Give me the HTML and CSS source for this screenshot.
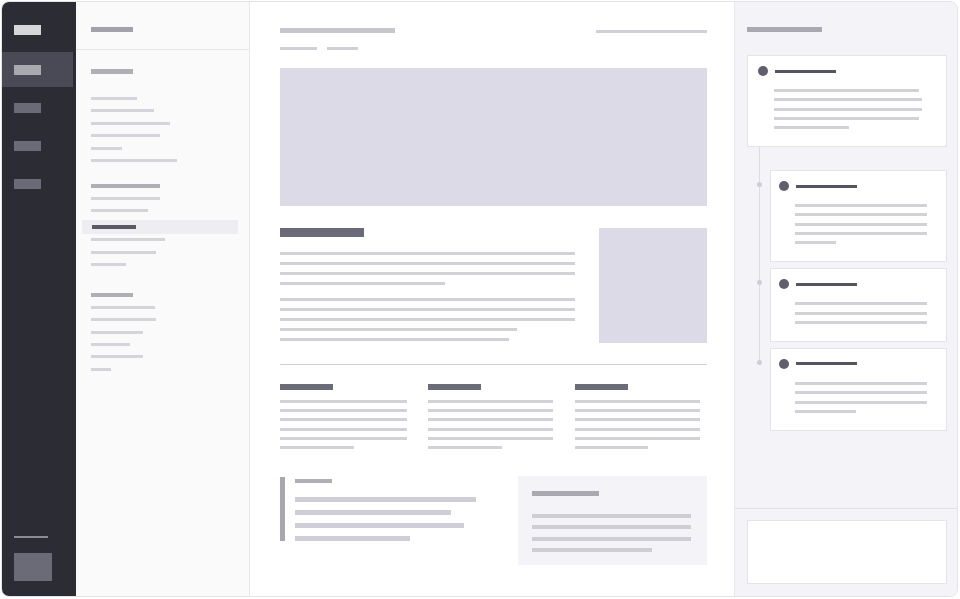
FILE: index.html
```html
<!DOCTYPE html>
<html lang="en">
<head>
<meta charset="utf-8">
<title>Docs wireframe</title>
<link rel="stylesheet" href="styles.css">
</head>
<body>
<div class="frame">
  <aside class="rail">
    <div class="rail-logo"></div>
    <nav class="rail-nav">
      <div class="rail-item active"><span class="rail-bar"></span></div>
      <div class="rail-item"><span class="rail-bar"></span></div>
      <div class="rail-item"><span class="rail-bar"></span></div>
      <div class="rail-item"><span class="rail-bar"></span></div>
    </nav>
    <div class="rail-foot">
      <div class="rail-line"></div>
      <div class="rail-avatar"></div>
    </div>
  </aside>

  <aside class="nav">
    <div class="nav-head"><span class="bar nav-title" style="width:42px"></span></div>
    <div class="nav-body">
      <span class="bar nav-heading first" style="width:42px"></span>
      <div class="nav-list first">
        <span class="bar item" style="width:46px"></span>
        <span class="bar item" style="width:63px"></span>
        <span class="bar item" style="width:79px"></span>
        <span class="bar item" style="width:69px"></span>
        <span class="bar item" style="width:31px"></span>
        <span class="bar item" style="width:86px"></span>
      </div>
      <span class="bar nav-heading second" style="width:69px"></span>
      <div class="nav-list">
        <span class="bar item" style="width:69px"></span>
        <span class="bar item" style="width:57px"></span>
        <div class="nav-active"><span class="bar item-active" style="width:44px"></span></div>
        <span class="bar item" style="width:74px"></span>
        <span class="bar item" style="width:65px"></span>
        <span class="bar item" style="width:35px"></span>
      </div>
      <span class="bar nav-heading third" style="width:42px"></span>
      <div class="nav-list">
        <span class="bar item" style="width:64px"></span>
        <span class="bar item" style="width:65px"></span>
        <span class="bar item" style="width:52px"></span>
        <span class="bar item" style="width:39px"></span>
        <span class="bar item" style="width:52px"></span>
        <span class="bar item" style="width:20px"></span>
      </div>
    </div>
  </aside>

  <main class="main">
    <div class="title-row">
      <span class="bar page-title" style="width:115px"></span>
      <span class="bar page-aside" style="width:111px"></span>
    </div>
    <div class="meta-row">
      <span class="bar meta" style="width:37px"></span>
      <span class="bar meta" style="width:31px"></span>
    </div>
    <div class="hero"></div>

    <section class="article">
      <div class="article-text">
        <span class="bar section-title" style="width:84px"></span>
        <div class="para first">
          <span class="bar line" style="width:295px"></span>
          <span class="bar line" style="width:295px"></span>
          <span class="bar line" style="width:295px"></span>
          <span class="bar line" style="width:165px"></span>
        </div>
        <div class="para">
          <span class="bar line" style="width:295px"></span>
          <span class="bar line" style="width:295px"></span>
          <span class="bar line" style="width:295px"></span>
          <span class="bar line" style="width:237px"></span>
          <span class="bar line" style="width:229px"></span>
        </div>
      </div>
      <div class="article-figure"></div>
    </section>

    <div class="divider"></div>

    <section class="columns">
      <div class="col">
        <span class="bar col-title" style="width:53px"></span>
        <div class="col-lines">
          <span class="bar line" style="width:127px"></span>
          <span class="bar line" style="width:127px"></span>
          <span class="bar line" style="width:127px"></span>
          <span class="bar line" style="width:127px"></span>
          <span class="bar line" style="width:127px"></span>
          <span class="bar line" style="width:74px"></span>
        </div>
      </div>
      <div class="col">
        <span class="bar col-title" style="width:53px"></span>
        <div class="col-lines">
          <span class="bar line" style="width:125px"></span>
          <span class="bar line" style="width:125px"></span>
          <span class="bar line" style="width:125px"></span>
          <span class="bar line" style="width:125px"></span>
          <span class="bar line" style="width:125px"></span>
          <span class="bar line" style="width:74px"></span>
        </div>
      </div>
      <div class="col">
        <span class="bar col-title" style="width:53px"></span>
        <div class="col-lines">
          <span class="bar line" style="width:125px"></span>
          <span class="bar line" style="width:125px"></span>
          <span class="bar line" style="width:125px"></span>
          <span class="bar line" style="width:125px"></span>
          <span class="bar line" style="width:125px"></span>
          <span class="bar line" style="width:73px"></span>
        </div>
      </div>
    </section>

    <section class="bottom-row">
      <blockquote class="quote">
        <span class="bar quote-title" style="width:37px"></span>
        <div class="quote-lines">
          <span class="bar qline" style="width:181px"></span>
          <span class="bar qline" style="width:156px"></span>
          <span class="bar qline" style="width:169px"></span>
          <span class="bar qline" style="width:115px"></span>
        </div>
      </blockquote>
      <div class="callout">
        <span class="bar callout-title" style="width:67px"></span>
        <div class="callout-lines">
          <span class="bar cline" style="width:159px"></span>
          <span class="bar cline" style="width:159px"></span>
          <span class="bar cline" style="width:159px"></span>
          <span class="bar cline" style="width:120px"></span>
        </div>
      </div>
    </section>
  </main>

  <aside class="panel">
    <div class="panel-top">
      <span class="bar panel-title" style="width:75px"></span>
      <div class="card root">
        <div class="card-head"><span class="dot"></span><span class="bar card-title" style="width:61px"></span></div>
        <div class="card-body">
          <span class="bar line" style="width:145px"></span>
          <span class="bar line" style="width:148px"></span>
          <span class="bar line" style="width:148px"></span>
          <span class="bar line" style="width:145px"></span>
          <span class="bar line" style="width:75px"></span>
        </div>
      </div>
      <div class="timeline">
        <div class="card reply">
          <div class="card-head"><span class="dot"></span><span class="bar card-title" style="width:61px"></span></div>
          <div class="card-body">
            <span class="bar line" style="width:132px"></span>
            <span class="bar line" style="width:132px"></span>
            <span class="bar line" style="width:132px"></span>
            <span class="bar line" style="width:132px"></span>
            <span class="bar line" style="width:41px"></span>
          </div>
        </div>
        <div class="card reply">
          <div class="card-head"><span class="dot"></span><span class="bar card-title" style="width:61px"></span></div>
          <div class="card-body">
            <span class="bar line" style="width:132px"></span>
            <span class="bar line" style="width:132px"></span>
            <span class="bar line" style="width:132px"></span>
          </div>
        </div>
        <div class="card reply">
          <div class="card-head"><span class="dot"></span><span class="bar card-title" style="width:61px"></span></div>
          <div class="card-body">
            <span class="bar line" style="width:132px"></span>
            <span class="bar line" style="width:132px"></span>
            <span class="bar line" style="width:132px"></span>
            <span class="bar line" style="width:61px"></span>
          </div>
        </div>
      </div>
    </div>
    <div class="panel-bottom">
      <div class="composer"></div>
    </div>
  </aside>
</div>
</body>
</html>
```

FILE: styles.css
```css
* { box-sizing: border-box; }
html, body { margin: 0; padding: 0; background: #ffffff; font-family: "Liberation Sans", Arial, sans-serif; }

.frame {
  margin: 1px;
  width: 957px;
  height: 596px;
  border: 1px solid #e4e3ea;
  border-radius: 8px;
  overflow: hidden;
  display: flex;
  background: #ffffff;
}

.bar { display: block; flex: none; }

/* dark rail */
.rail {
  width: 74px;
  flex: none;
  background: #2c2d34;
  display: flex;
  flex-direction: column;
}
.rail-logo {
  margin: 23px 0 0 12px;
  width: 27px;
  height: 10px;
  background: #d6d6d9;
}
.rail-nav {
  margin-top: 17px;
  display: flex;
  flex-direction: column;
  gap: 3px;
}
.rail-item {
  height: 35px;
  margin-right: 3px;
  padding-left: 12px;
  display: flex;
  align-items: center;
}
.rail-item.active { background: #4a4a56; }
.rail-bar { display: block; width: 27px; height: 10px; background: #6b6b77; }
.rail-item.active .rail-bar { background: #a9a9b0; }
.rail-foot {
  margin-top: auto;
  padding: 0 0 15px 12px;
  display: flex;
  flex-direction: column;
  gap: 15px;
}
.rail-line { width: 34px; height: 2px; background: #8c8c96; }
.rail-avatar { width: 38px; height: 28px; background: #6b6b77; }

/* nav column */
.nav {
  width: 174px;
  flex: none;
  background: #fafafa;
  border-right: 1px solid #e8e7ec;
}
.nav-head {
  height: 48px;
  padding: 25px 0 0 15px;
  border-bottom: 1px solid #e4e3e9;
}
.nav-title { height: 5px; background: #a3a2aa; }
.nav-body { padding: 19px 11px 0 15px; }
.nav-heading { height: 4px; background: #b0afb7; }
.nav-heading.first { height: 5px; }
.nav-heading.second { margin-top: 22px; }
.nav-heading.third { margin-top: 27px; }
.nav-list {
  margin-top: 9px;
  display: flex;
  flex-direction: column;
  gap: 9.4px;
}
.nav-list.first { margin-top: 23px; }
.item { height: 3px; background: #d5d4da; }
.nav-active {
  margin: -2px 0 -5px -9px;
  height: 14px;
  padding: 5px 0 0 10px;
  background: #eeedf2;
}
.item-active { height: 4px; background: #5b5a66; }

/* main */
.main {
  width: 484px;
  flex: none;
  padding: 26px 27px 0 30px;
  background: #ffffff;
}
.title-row {
  display: flex;
  justify-content: space-between;
  align-items: flex-end;
}
.page-title { height: 5px; background: #c7c6cd; }
.page-aside { height: 3px; background: #d0cfd6; }
.meta-row { margin-top: 14px; display: flex; gap: 10px; }
.meta { height: 3px; background: #d0cfd6; }
.hero { margin-top: 18px; height: 138px; background: #dcdae6; }

.article {
  margin-top: 22px;
  display: flex;
  justify-content: space-between;
}
.article-text { width: 295px; }
.section-title { height: 9px; background: #6b6a78; }
.para { margin-top: 13px; display: flex; flex-direction: column; gap: 7px; }
.para.first { margin-top: 15px; }
.line { height: 3px; background: #d2d1d8; }
.article-figure { width: 108px; height: 115px; background: #dcdae6; }

.divider { margin-top: 21px; height: 1px; background: #cfcdd5; }

.columns {
  margin-top: 19px;
  display: grid;
  grid-template-columns: 128px 127px 127px;
  column-gap: 20px;
}
.col-title { height: 6px; background: #6c6b78; }
.col-lines { margin-top: 10px; display: flex; flex-direction: column; gap: 6.2px; }

.bottom-row {
  margin-top: 27px;
  display: flex;
  justify-content: space-between;
  align-items: flex-start;
}
.quote {
  margin: 1px 0 0 0;
  height: 64px;
  width: 220px;
  border-left: 5px solid #a8a7b0;
  padding: 2px 0 0 10px;
}
.quote-title { height: 4px; background: #b0afb7; }
.quote-lines { margin-top: 14px; display: flex; flex-direction: column; gap: 8px; }
.qline { height: 5px; background: #cfcdd5; }
.callout {
  width: 189px;
  height: 89px;
  padding: 15px 16px 0 14px;
  background: #f4f3f8;
}
.callout-title { height: 5px; background: #aaa9b1; }
.callout-lines { margin-top: 18px; display: flex; flex-direction: column; gap: 7.3px; }
.cline { height: 4px; background: #cfcdd5; }

/* right panel */
.panel {
  width: 223px;
  flex: none;
  background: #f4f3f8;
  border-left: 1px solid #e8e7ee;
  display: flex;
  flex-direction: column;
}
.panel-top { flex: 1; padding: 25px 10px 0 12px; }
.panel-title { height: 5px; background: #aaa9b1; }
.card {
  background: #ffffff;
  border: 1px solid #e4e3ea;
  padding: 10px 10px 17px 10px;
}
.card.root { margin-top: 23px; }
.card-head { display: flex; align-items: center; gap: 7px; }
.dot { display: block; width: 10px; height: 10px; border-radius: 50%; background: #605f6c; flex: none; }
.card-title { height: 3px; background: #55545f; }
.card-body { margin-top: 13px; margin-left: 16px; display: flex; flex-direction: column; gap: 6.3px; }
.timeline {
  position: relative;
  margin-top: 23px;
  padding-left: 23px;
  display: flex;
  flex-direction: column;
  gap: 6px;
}
.timeline::before {
  content: "";
  position: absolute;
  left: 12px;
  top: -23px;
  bottom: 70px;
  width: 1px;
  background: #dedde4;
}
.card.reply { position: relative; padding-left: 8px; }
.card.reply::before {
  content: "";
  position: absolute;
  left: -14px;
  top: 11px;
  width: 5px;
  height: 5px;
  border-radius: 50%;
  background: #cfcdd5;
}
.card.reply .card-body { margin-left: 16px; }
.panel-bottom {
  border-top: 1px solid #e2e1e8;
  padding: 11px 10px 12px 12px;
}
.composer {
  height: 64px;
  background: #ffffff;
  border: 1px solid #e4e3ea;
}
```
